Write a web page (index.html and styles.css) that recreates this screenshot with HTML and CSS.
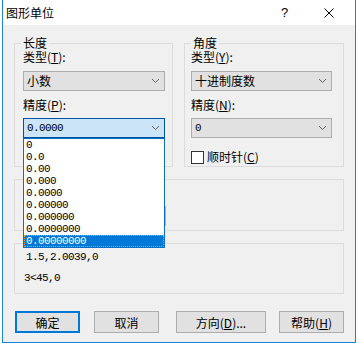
FILE: index.html
```html
<!DOCTYPE html>
<html lang="zh-CN">
<head>
  <meta charset="UTF-8" />
  <title>图形单位</title>
  <link rel="stylesheet" href="styles.css">
</head>
<body>
  <div class="window">
    <div class="titlebar">
      <span class="title">图形单位</span>
      <span class="help">?</span>
      <span class="close">
        <svg width="10" height="10" viewBox="0 0 10 10"><path d="M0.5 0.5 L9.5 9.5 M9.5 0.5 L0.5 9.5" stroke="#000" stroke-width="1" fill="none"/></svg>
      </span>
    </div>

    <div class="dialog">
      <div class="row-top">
        <div class="group group-length">
          <span class="legend">长度</span>
          <div class="label">类型(<u>T</u>):</div>
          <div class="select">小数<svg class="chev" width="7" height="4" viewBox="0 0 7 4"><path d="M0 0 L3.5 3.5 L7 0" stroke="#606060" fill="none"/></svg></div>
          <div class="label second">精度(<u>P</u>):</div>
          <div class="combo">
            <div class="select open"><span class="num">0.0000</span><svg class="chev" width="7" height="4" viewBox="0 0 7 4"><path d="M0 0 L3.5 3.5 L7 0" stroke="#606060" fill="none"/></svg></div>
            <ul class="droplist">
              <li>0</li>
              <li>0.0</li>
              <li>0.00</li>
              <li>0.000</li>
              <li>0.0000</li>
              <li>0.00000</li>
              <li>0.000000</li>
              <li>0.0000000</li>
              <li class="active">0.00000000</li>
            </ul>
          </div>
        </div>

        <div class="group group-angle">
          <span class="legend">角度</span>
          <div class="label">类型(<u>Y</u>):</div>
          <div class="select">十进制度数<svg class="chev" width="7" height="4" viewBox="0 0 7 4"><path d="M0 0 L3.5 3.5 L7 0" stroke="#606060" fill="none"/></svg></div>
          <div class="label second">精度(<u>N</u>):</div>
          <div class="select"><span class="num">0</span><svg class="chev" width="7" height="4" viewBox="0 0 7 4"><path d="M0 0 L3.5 3.5 L7 0" stroke="#606060" fill="none"/></svg></div>
          <label class="check"><span class="box"></span>顺时针(<u>C</u>)</label>
        </div>
      </div>

      <!-- scale group, mostly hidden behind the open list -->
      <div class="group group-insert">
        <div class="select wide"></div>
      </div>

      <div class="group group-sample">
        <div class="sample first">1.5,2.0039,0</div>
        <div class="sample">3&lt;45,0</div>
      </div>

      <div class="buttons">
        <button class="btn btn-default">确定</button>
        <button class="btn btn-cancel">取消</button>
        <button class="btn btn-dir">方向(<u>D</u>)...</button>
        <button class="btn btn-help">帮助(<u>H</u>)</button>
      </div>
    </div>
  </div>
</body>
</html>
```

FILE: styles.css
```css
body {
  margin: 0;
  padding: 0;
  background-color: #ffffff;
  font-family: "Noto Sans CJK SC", "Noto Sans", sans-serif;
  font-size: 12px;
  color: #000;
}

.window {
  width: 354px;
  height: 343px;
  margin-left: 2px;
  box-sizing: border-box;
  border: 1px solid #1883d7;
  border-top: none;
  background-color: #f0f0f0;
}

.titlebar {
  height: 25px;
  background-color: #ffffff;
  display: flex;
  align-items: center;
  padding-left: 3px;
}

.title {
  line-height: 16px;
}

.help {
  margin-left: auto;
  width: 6px;
  font-family: "Liberation Sans", sans-serif;
  font-size: 13px;
}

.close {
  display: flex;
  margin-left: 37px;
  margin-right: 21px;
}

.dialog {
  padding: 18px 11px 0 11px;
}

.row-top {
  display: flex;
  gap: 11px;
}

.group {
  position: relative;
  box-sizing: border-box;
  border: 1px solid #dcdcdc;
}

.legend {
  position: absolute;
  top: -7px;
  left: 6px;
  padding: 0 2px;
  line-height: 12px;
  background-color: #f0f0f0;
}

.group-length,
.group-angle {
  height: 124px;
  padding-top: 5px;
}

.group-length {
  width: 159px;
  padding-left: 8px;
}

.group-angle {
  width: 160px;
  padding-left: 6px;
}

.label {
  line-height: 16px;
  margin-bottom: 6px;
}

.label.second {
  margin-top: 6px;
  margin-bottom: 5px;
}

.select {
  box-sizing: border-box;
  height: 20px;
  width: 142px;
  border: 1px solid #adadad;
  background-color: #e1e1e1;
  display: flex;
  align-items: center;
  padding-left: 3px;
  line-height: 16px;
}

.group-angle .select {
  width: 141px;
}

.select .chev {
  margin-left: auto;
  margin-right: 5px;
}

.select.open {
  background-color: #cce4f7;
  border-color: #005499;
}

.num,
.droplist,
.sample {
  font-family: "Liberation Mono", monospace;
  font-size: 11px;
  letter-spacing: -0.6px;
}

.combo {
  position: relative;
  z-index: 2;
}

.droplist {
  position: absolute;
  top: 100%;
  left: 0;
  width: 142px;
  box-sizing: border-box;
  margin: 0;
  padding: 0;
  list-style: none;
  background-color: #ffffff;
  border: 1px solid #0b6ec4;
}

.droplist li {
  height: 12px;
  line-height: 12px;
  padding-left: 2px;
}

.droplist li.active {
  background-color: #0078d7;
  color: #ffffff;
  box-sizing: border-box;
  border: 1px dotted #ff9a1c;
  padding-left: 1px;
  line-height: 10px;
}

.check {
  display: flex;
  align-items: center;
  margin-top: 11px;
  line-height: 16px;
}

.check .box {
  width: 13px;
  height: 13px;
  box-sizing: border-box;
  border: 1px solid #333333;
  background-color: #ffffff;
  margin-right: 3px;
}

.group-insert {
  margin-top: 12px;
  height: 52px;
  padding: 26px 0 0 8px;
}

.select.wide {
  width: 143px;
}

.group-sample {
  margin-top: 12px;
  height: 51px;
  padding: 5px 0 0 9px;
}

.sample {
  line-height: 16px;
}

.sample.first {
  padding-left: 2px;
  margin-bottom: 5px;
}

.buttons {
  display: flex;
  margin-top: 17px;
}

.btn {
  box-sizing: border-box;
  height: 22px;
  padding: 0;
  font-family: inherit;
  font-size: 12px;
  color: #000;
  background-color: #e1e1e1;
  border: 1px solid #adadad;
}

.btn-default {
  width: 65px;
  margin-left: 1px;
  border: 2px solid #0078d7;
}

.btn-cancel {
  width: 65px;
  margin-left: 14px;
}

.btn-dir {
  width: 90px;
  margin-left: 17px;
}

.btn-help {
  width: 65px;
  margin-left: 13px;
}
```
